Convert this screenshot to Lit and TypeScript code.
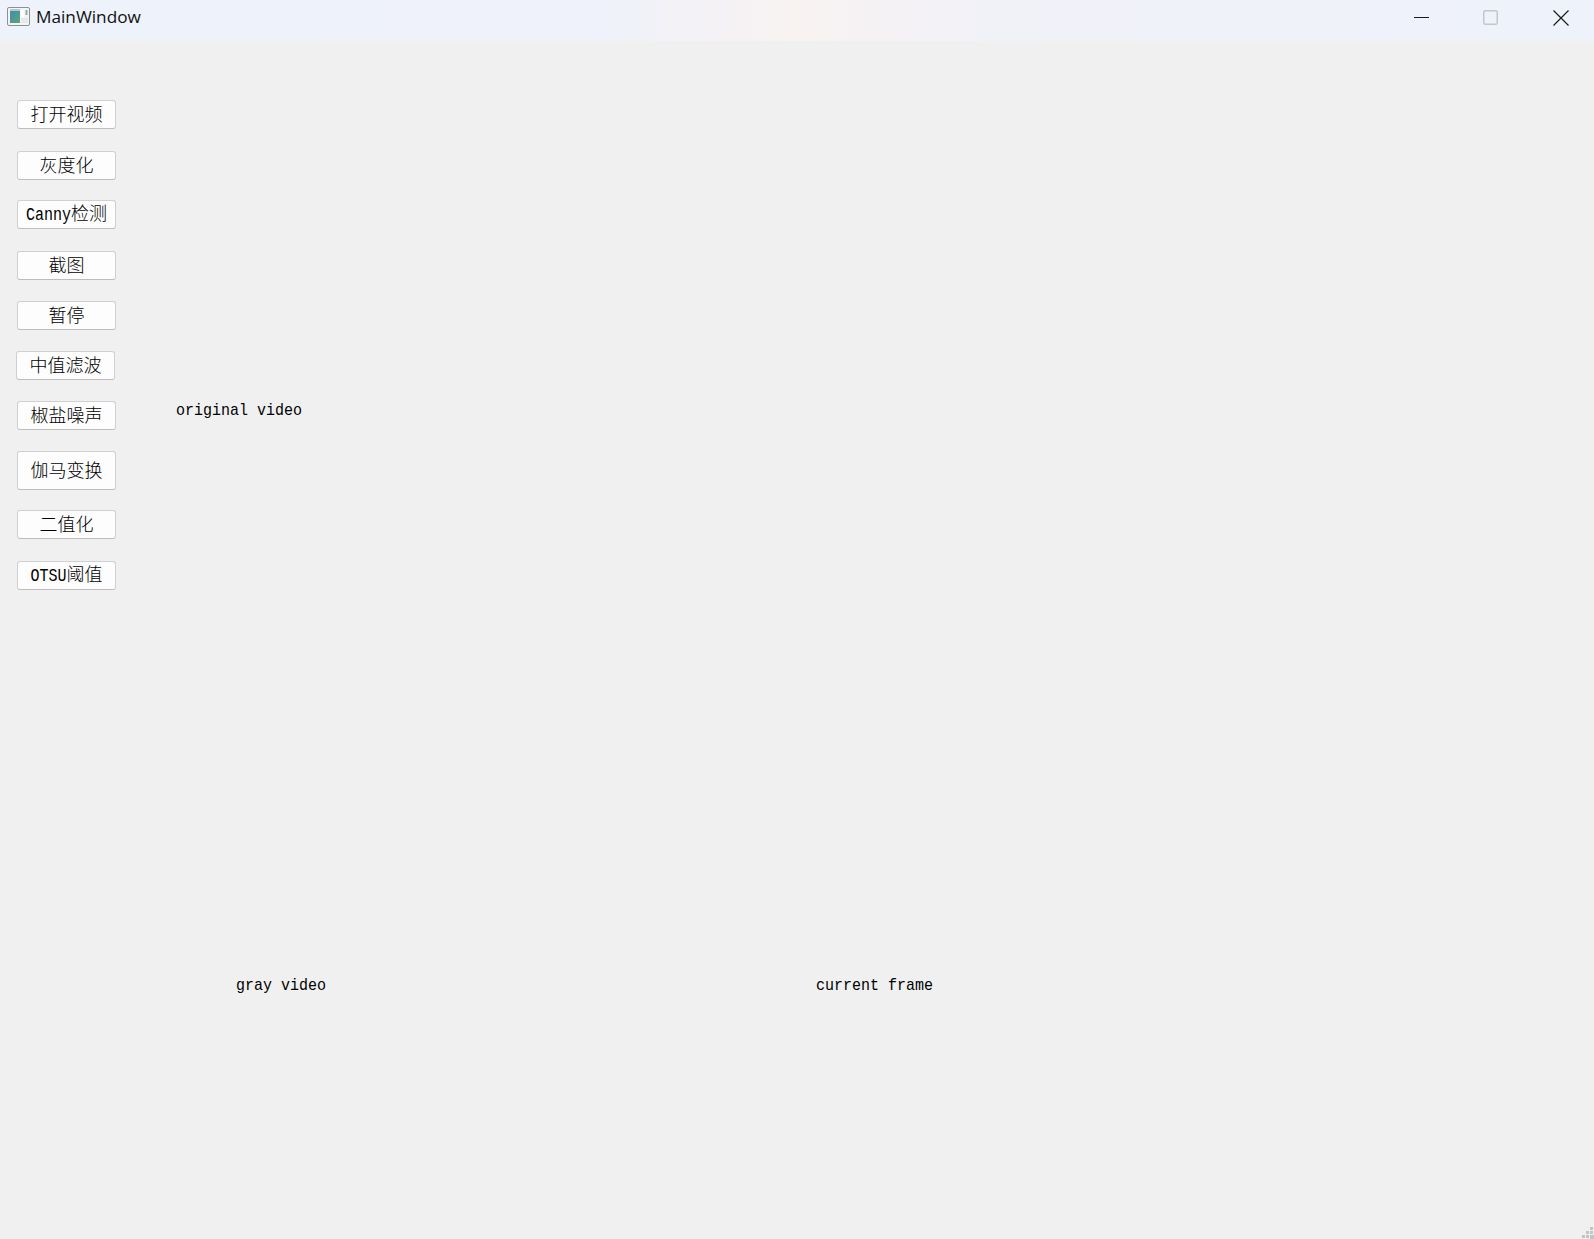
import { LitElement, html, css } from "lit";
import { customElement } from "lit/decorators.js";

type Btn = { lat?: string; cjk: string; top: number; shift?: number; tall?: boolean };

const BUTTONS: Btn[] = [
  { cjk: "打开视频", top: 0 },
  { cjk: "灰度化", top: 22 },
  { lat: "Canny", cjk: "检测", top: 20 },
  { cjk: "截图", top: 22 },
  { cjk: "暂停", top: 21 },
  { cjk: "中值滤波", top: 21, shift: -1 },
  { cjk: "椒盐噪声", top: 21 },
  { cjk: "伽马变换", top: 21, tall: true },
  { cjk: "二值化", top: 20 },
  { lat: "OTSU", cjk: "阈值", top: 22 },
];

@customElement("app-root")
export class AppRoot extends LitElement {
  static styles = css`
    :host {
      display: block;
      width: 1594px;
      height: 1239px;
      overflow: hidden;
    }
    .window {
      position: relative;
      display: flex;
      flex-direction: column;
      width: 1594px;
      height: 1239px;
      background: #f0f0f0;
      color: #000;
    }
    .titlebar {
      flex: none;
      display: flex;
      align-items: center;
      height: 41px;
      padding-bottom: 6px;
      box-sizing: border-box;
      background: linear-gradient(90deg, #eef2fb 0%, #eff2fa 38%, #f8f2f1 50%, #f1f2f8 62%, #eef2fb 100%);
    }
    .app-icon {
      flex: none;
      margin-left: 7px;
      width: 24px;
      height: 22px;
    }
    .title {
      flex: 1;
      margin: -2px 0 0 5px;
      font: 17.2px "Open Sans", "Noto Sans", sans-serif;
      color: #111;
    }
    .controls {
      display: flex;
      align-items: center;
      flex: none;
    }
    .ctl {
      display: block;
      flex: none;
    }
    .ctl-min { margin-right: 54px; }
    .ctl-max { margin-right: 55px; }
    .ctl-close { margin-right: 25px; }
    .content {
      flex: 1;
      display: flex;
      flex-direction: column;
    }
    .top-row {
      display: flex;
      align-items: flex-start;
      padding: 59px 0 0 17px;
    }
    .sidebar {
      display: flex;
      flex-direction: column;
      align-items: flex-start;
      width: 99px;
    }
    .btn {
      box-sizing: border-box;
      display: block;
      width: 99px;
      height: 29px;
      background: #fdfdfd;
      border: 1px solid #d0d0d0;
      border-bottom-color: #bdbdbd;
      border-radius: 3px;
      padding: 0 0 3px;
      text-align: center;
      font-family: "Noto Sans CJK SC", sans-serif;
      font-size: 18px;
      font-weight: 300;
      line-height: 1;
      color: #000;
    }
    .btn.tall { height: 39px; }
    .lat {
      display: inline-block;
      font-family: "Liberation Mono", monospace;
      font-size: 15px;
      font-weight: 400;
      transform: scaleY(1.2);
      transform-origin: 50% 80%;
    }
    .label {
      display: block;
      font-family: "Liberation Mono", monospace;
      font-size: 15px;
      line-height: 17px;
      white-space: pre;
      transform: scaleY(1.12);
      transform-origin: 50% 70%;
    }
    .original {
      margin: 303px 0 0 60px;
    }
    .bottom-row {
      display: flex;
      padding: 388px 0 0 236px;
    }
    .current {
      margin-left: 490px;
    }
    .grip {
      position: absolute;
      right: 0;
      bottom: 0;
      width: 12px;
      height: 12px;
      display: block;
    }
  `;

  render() {
    return html`
      <div class="window">
        <header class="titlebar">
          <svg class="app-icon" viewBox="0 0 24 22" aria-hidden="true">
            <defs>
              <linearGradient id="g" x1="0" y1="0" x2="1" y2="1">
                <stop offset="0" stop-color="#3f8fae" />
                <stop offset="1" stop-color="#5fa47a" />
              </linearGradient>
            </defs>
            <rect x="0.5" y="0.5" width="22" height="18" rx="1.5" fill="#f2f4f6" stroke="#8b8f96" />
            <rect x="3" y="4" width="10" height="12" fill="url(#g)" />
            <rect x="3" y="2" width="10" height="2" fill="#b8c6d2" />
            <rect x="14" y="3" width="3" height="7" fill="#ffffff" />
            <rect x="18.5" y="3" width="2" height="5" fill="#9aa5a8" />
            <rect x="14" y="11" width="7" height="5" fill="#e6e9ea" />
          </svg>
          <span class="title">MainWindow</span>
          <div class="controls">
            <svg class="ctl ctl-min" width="15" height="15" viewBox="0 0 15 15" aria-hidden="true">
              <path d="M0 7.5H15" stroke="#1a1a1a" stroke-width="1" />
            </svg>
            <svg class="ctl ctl-max" width="15" height="15" viewBox="0 0 15 15" aria-hidden="true">
              <rect x="0.75" y="0.75" width="13.5" height="13.5" rx="1.5" fill="none" stroke="#c4c6ca" stroke-width="1.5" />
            </svg>
            <svg class="ctl ctl-close" width="16" height="16" viewBox="0 0 16 16" aria-hidden="true">
              <path d="M0.5 0.5L15.5 15.5M15.5 0.5L0.5 15.5" stroke="#1a1a1a" stroke-width="1.2" />
            </svg>
          </div>
        </header>
        <main class="content">
          <div class="top-row">
            <div class="sidebar">
              ${BUTTONS.map(
                (b) => html`<button
                  class="btn ${b.tall ? "tall" : ""}"
                  style="margin-top:${b.top}px;margin-left:${b.shift ?? 0}px"
                >${b.lat ? html`<span class="lat">${b.lat}</span>` : ""}${b.cjk}</button>`
              )}
            </div>
            <span class="label original">original video</span>
          </div>
          <div class="bottom-row">
            <span class="label">gray video</span>
            <span class="label current">current frame</span>
          </div>
        </main>
        <svg class="grip" viewBox="0 0 12 12" aria-hidden="true">
          <g fill="#c4c4c4">
            <rect x="8" y="0" width="3" height="3" />
            <rect x="4" y="4" width="3" height="3" />
            <rect x="8" y="4" width="3" height="3" />
            <rect x="0" y="8" width="3" height="3" />
            <rect x="4" y="8" width="3" height="3" />
            <rect x="8" y="8" width="4" height="4" />
          </g>
        </svg>
      </div>
    `;
  }
}
